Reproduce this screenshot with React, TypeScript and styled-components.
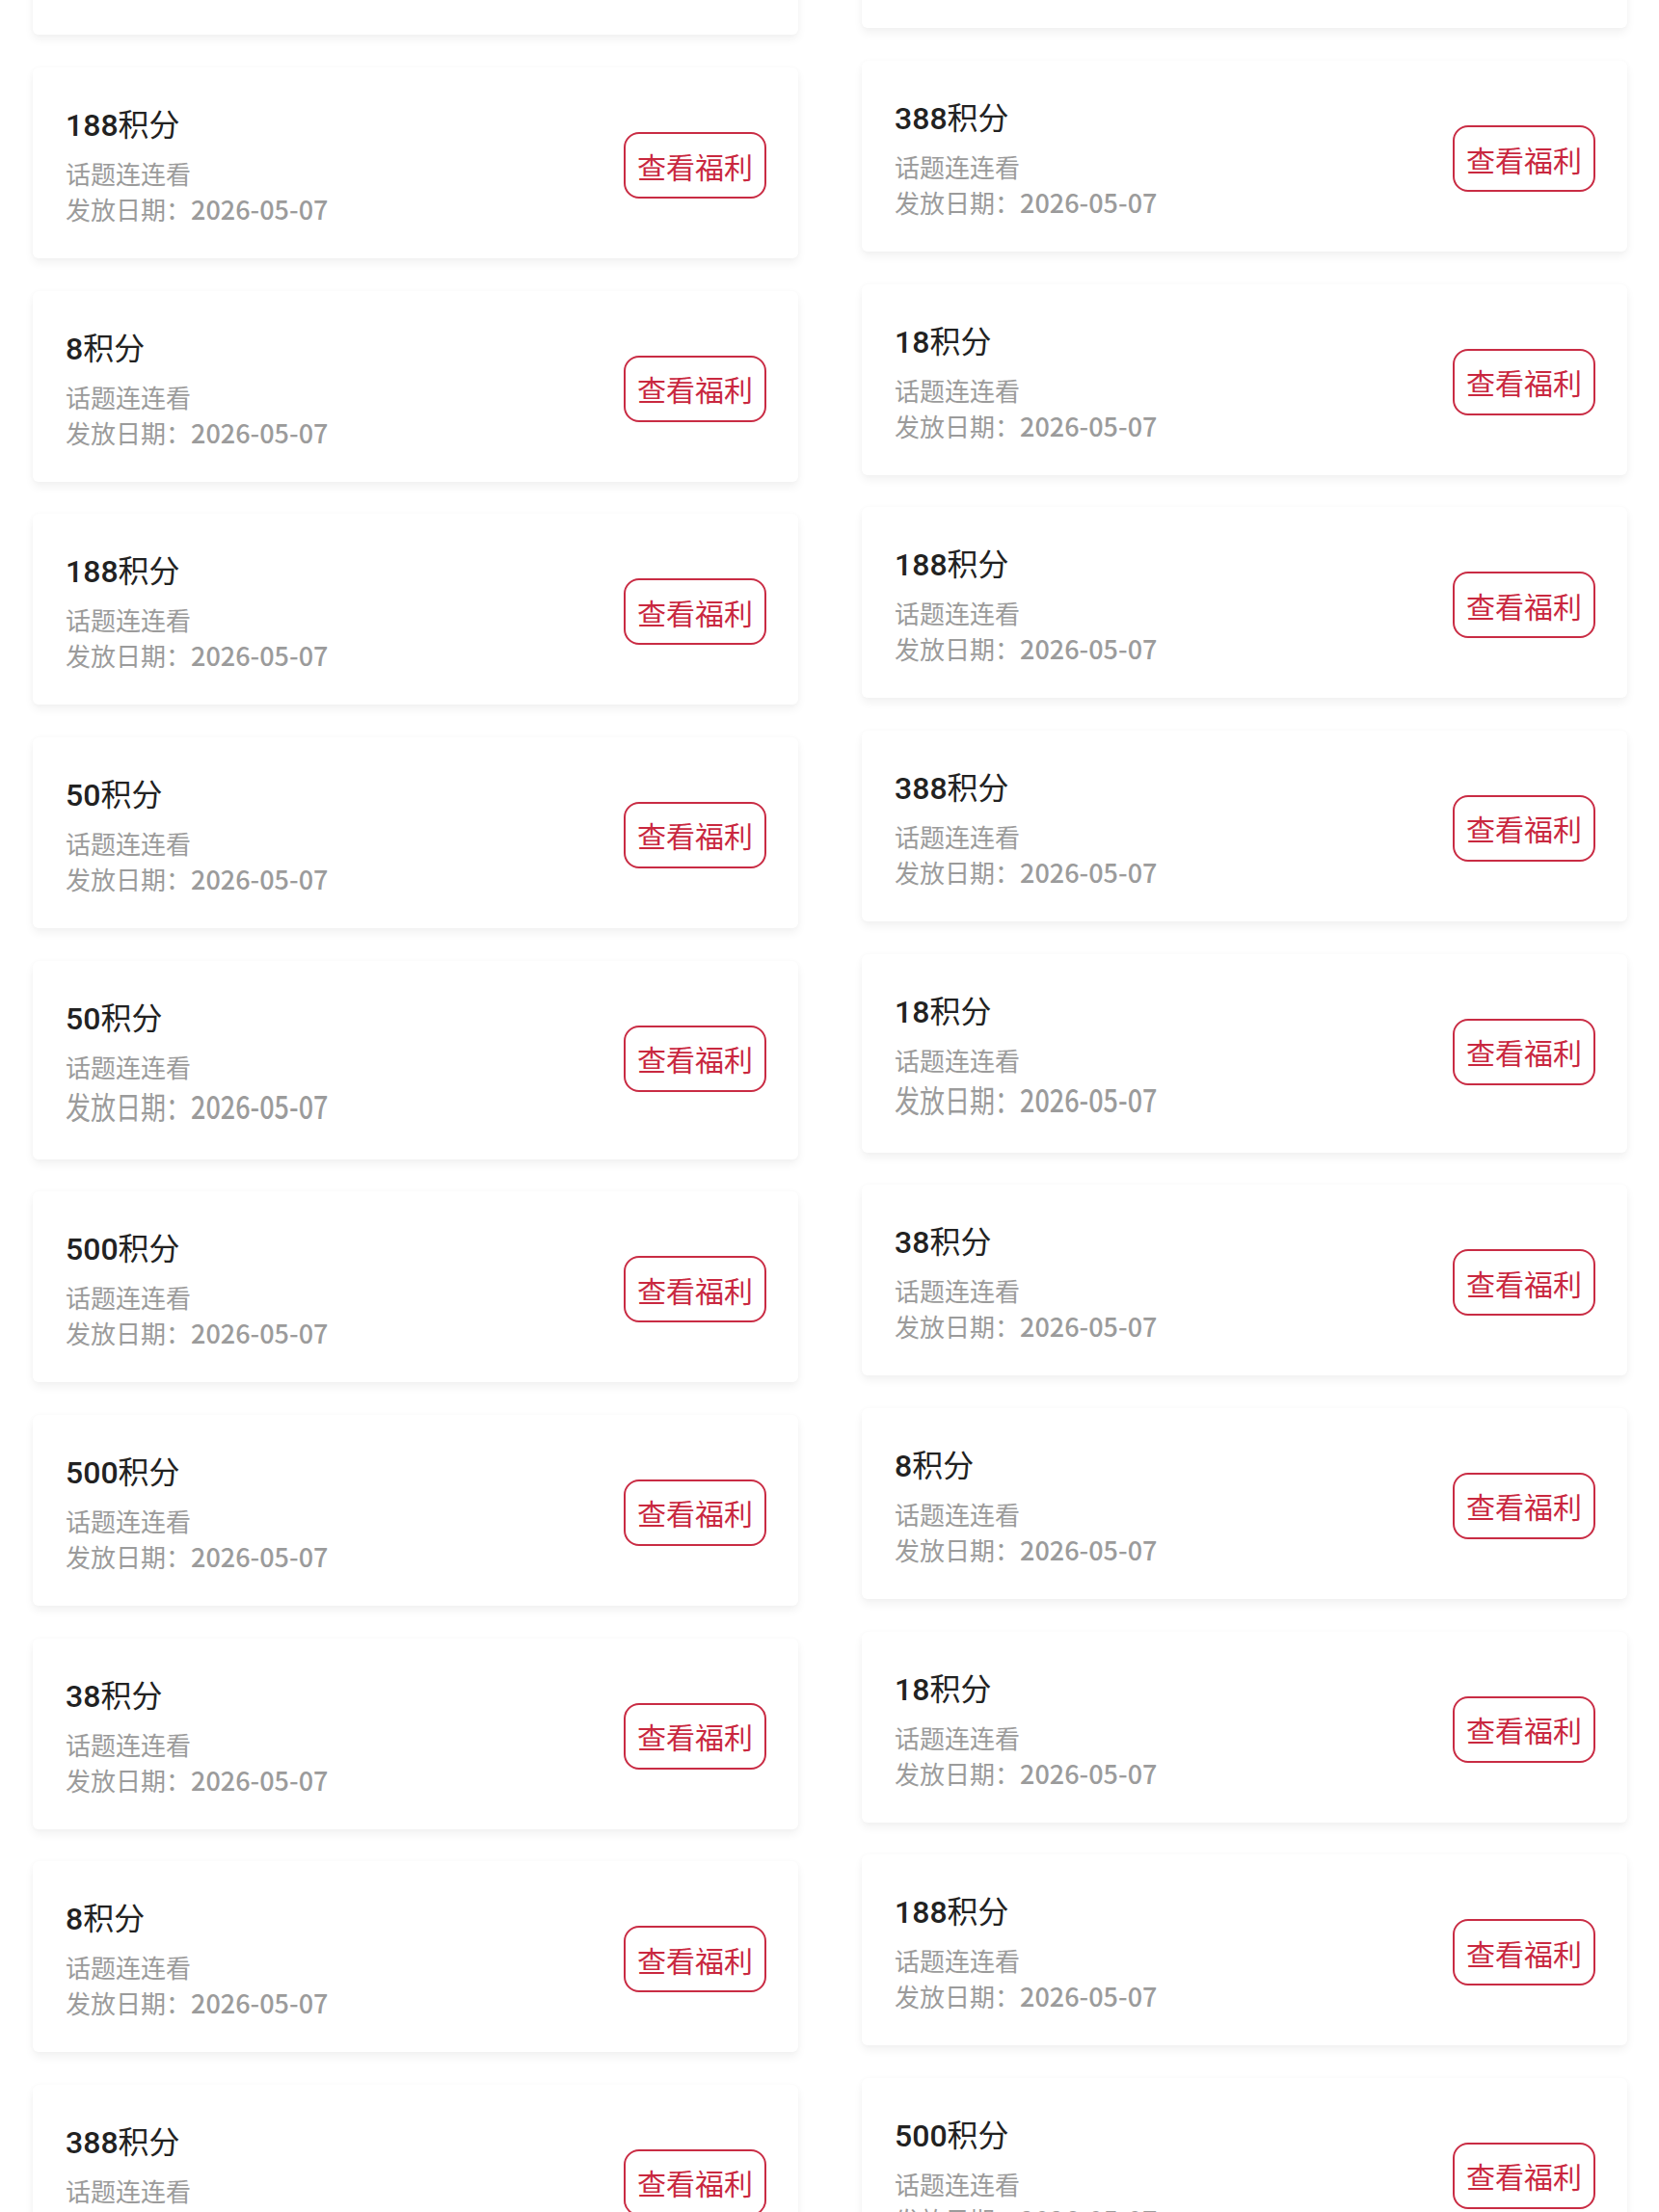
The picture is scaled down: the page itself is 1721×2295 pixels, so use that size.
import React from "react";
import styled, { createGlobalStyle } from "styled-components";

const GlobalStyle = createGlobalStyle`
  html, body {
    margin: 0;
    padding: 0;
    background: #ffffff;
  }
  body {
    font-family: "Noto Sans CJK SC", "Noto Sans", sans-serif;
  }
`;

interface Reward {
  points: string;
  topic: string;
  date: string;
  stretched?: boolean;
}

const leftRewards: Reward[] = [
  { points: "188", topic: "话题连连看", date: "2026-05-07" },
  { points: "188", topic: "话题连连看", date: "2026-05-07" },
  { points: "8", topic: "话题连连看", date: "2026-05-07" },
  { points: "188", topic: "话题连连看", date: "2026-05-07" },
  { points: "50", topic: "话题连连看", date: "2026-05-07" },
  { points: "50", topic: "话题连连看", date: "2026-05-07", stretched: true },
  { points: "500", topic: "话题连连看", date: "2026-05-07" },
  { points: "500", topic: "话题连连看", date: "2026-05-07" },
  { points: "38", topic: "话题连连看", date: "2026-05-07" },
  { points: "8", topic: "话题连连看", date: "2026-05-07" },
  { points: "388", topic: "话题连连看", date: "2026-05-07" },
];

const rightRewards: Reward[] = [
  { points: "38", topic: "话题连连看", date: "2026-05-07" },
  { points: "388", topic: "话题连连看", date: "2026-05-07" },
  { points: "18", topic: "话题连连看", date: "2026-05-07" },
  { points: "188", topic: "话题连连看", date: "2026-05-07" },
  { points: "388", topic: "话题连连看", date: "2026-05-07" },
  { points: "18", topic: "话题连连看", date: "2026-05-07", stretched: true },
  { points: "38", topic: "话题连连看", date: "2026-05-07" },
  { points: "8", topic: "话题连连看", date: "2026-05-07" },
  { points: "18", topic: "话题连连看", date: "2026-05-07" },
  { points: "188", topic: "话题连连看", date: "2026-05-07" },
  { points: "500", topic: "话题连连看", date: "2026-05-07" },
];

const Viewport = styled.div`
  height: 2295px;
  overflow: hidden;
  background: #ffffff;
`;

const Columns = styled.div`
  display: grid;
  grid-template-columns: 794px 794px;
  column-gap: 66px;
  padding: 0 33px 0 34px;
  align-items: start;
`;

// the page is scrolled, each column sits at its own scroll offset
const Column = styled.div<{ $offset: number }>`
  display: flex;
  flex-direction: column;
  gap: 33.67px;
  margin-top: ${(p) => -p.$offset}px;
`;

const Card = styled.div<{ $stretched?: boolean }>`
  box-sizing: border-box;
  height: ${(p) => (p.$stretched ? 206 : 198)}px;
  display: flex;
  align-items: flex-start;
  justify-content: space-between;
  background: #ffffff;
  border-radius: 6px;
  padding: 35px 33px 0 34px;
  box-shadow: 0 5px 10px rgba(0, 0, 0, 0.055), 0 0 6px rgba(0, 0, 0, 0.025);
`;

const Info = styled.div`
  display: flex;
  flex-direction: column;
`;

const Title = styled.div`
  font-size: 32px;
  line-height: 44px;
  height: 44px;
  font-weight: 400;
  color: #222222;
  margin-bottom: 13px;
  white-space: nowrap;
`;

const Num = styled.span`
  font-family: Roboto, sans-serif;
  font-size: 32px;
  font-weight: 500;
`;

const Topic = styled.div`
  font-size: 26px;
  line-height: 36px;
  height: 36px;
  color: #9b9b9b;
`;

const DateLine = styled.div<{ $stretched?: boolean }>`
  font-size: 26px;
  line-height: ${(p) => (p.$stretched ? 44 : 36)}px;
  height: ${(p) => (p.$stretched ? 44 : 36)}px;
  margin-top: 1px;
  color: #9b9b9b;
  white-space: nowrap;
  & > span.inner {
    display: inline-block;
    transform: ${(p) => (p.$stretched ? "scaleY(1.22)" : "none")};
  }
`;

const DateNum = styled.span`
  font-size: 27px;
  font-weight: 500;
`;

const ViewButton = styled.button`
  box-sizing: border-box;
  width: 148px;
  height: 69px;
  margin-top: 32px;
  border: 2px solid #c92c44;
  border-radius: 16px;
  background: #ffffff;
  color: #c9283f;
  font-family: "Noto Sans CJK SC", sans-serif;
  font-size: 30px;
  line-height: 1;
  padding: 0;
  display: flex;
  align-items: center;
  justify-content: center;
  cursor: pointer;
`;

const RewardCard: React.FC<{ reward: Reward }> = ({ reward }) => (
  <Card $stretched={reward.stretched}>
    <Info>
      <Title>
        <Num>{reward.points}</Num>积分
      </Title>
      <Topic>{reward.topic}</Topic>
      <DateLine $stretched={reward.stretched}>
        <span className="inner">
          发放日期：<DateNum>{reward.date}</DateNum>
        </span>
      </DateLine>
    </Info>
    <ViewButton>查看福利</ViewButton>
  </Card>
);

const App: React.FC = () => {
  return (
    <Viewport>
      <GlobalStyle />
      <Columns>
        <Column $offset={161.67}>
          {leftRewards.map((r, i) => (
            <RewardCard key={i} reward={r} />
          ))}
        </Column>
        <Column $offset={168.67}>
          {rightRewards.map((r, i) => (
            <RewardCard key={i} reward={r} />
          ))}
        </Column>
      </Columns>
    </Viewport>
  );
};

export default App;
